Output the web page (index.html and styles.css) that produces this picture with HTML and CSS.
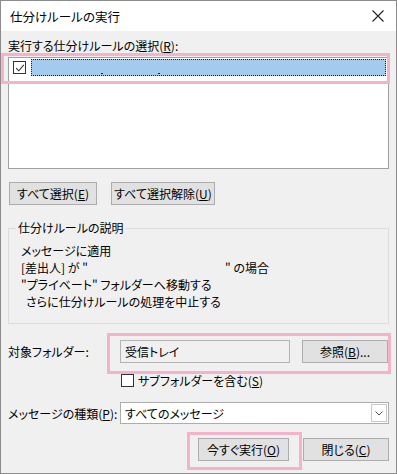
FILE: index.html
```html
<!DOCTYPE html>
<html lang="ja">
<head>
<meta charset="utf-8">
<link rel="stylesheet" href="styles.css">
</head>
<body>
<div class="window">
  <div class="titlebar">
    <span class="title">仕分けルールの実行</span>
    <svg class="close" width="14" height="14" viewBox="0 0 14 14"><path d="M1.5 1.5 L12.5 12.5 M12.5 1.5 L1.5 12.5" stroke="#222" stroke-width="1.1" fill="none"/></svg>
  </div>
  <div class="content">
    <div class="list-label">実行する仕分けルールの選択(<u>R</u>):</div>
    <div class="list">
      <div class="row">
        <span class="chk checked"><svg width="10" height="10" viewBox="0 0 10 10"><path d="M1.2 5.2 L3.8 7.8 L8.8 1.8" stroke="#333" stroke-width="1.1" fill="none"/></svg></span>
        <span class="sel"><i class="dot d1"></i><i class="dot d2"></i></span>
      </div>
    </div>
    <div class="btn-row">
      <button class="btn w88">すべて選択(<u>E</u>)</button>
      <button class="btn w104">すべて選択解除(<u>U</u>)</button>
    </div>
    <fieldset class="group">
      <legend>仕分けルールの説明</legend>
      <div class="desc">
        <div>メッセージに適用</div>
        <div class="line2"><span class="c1">[差出人] が "</span><span>" の場合</span></div>
        <div>"プライベート" フォルダーへ移動する</div>
        <div class="ind">さらに仕分けルールの処理を中止する</div>
      </div>
    </fieldset>
    <div class="folder-row">
      <span class="lbl">対象フォルダー:</span>
      <div class="field">受信トレイ</div>
      <button class="btn w86">参照(<u>B</u>)...</button>
    </div>
    <div class="sub-row">
      <span class="chk"></span><span>サブフォルダーを含む(<u>S</u>)</span>
    </div>
    <div class="type-row">
      <span class="lbl">メッセージの種類(<u>P</u>):</span>
      <div class="select"><span>すべてのメッセージ</span><span class="arrow"><svg width="8" height="5" viewBox="0 0 8 5"><path d="M0.5 0.5 L4 4 L7.5 0.5" stroke="#555" fill="none"/></svg></span></div>
    </div>
    <div class="foot-row">
      <button class="btn w91">今すぐ実行(<u>O</u>)</button>
      <button class="btn w86">閉じる(<u>C</u>)</button>
    </div>
  </div>
  <div class="hl hl1"></div>
  <div class="hl hl2"></div>
  <div class="hl hl3"></div>
</div>
</body>
</html>
```
FILE: styles.css
```css
* { box-sizing: border-box; }
html, body { margin: 0; padding: 0; }
body {
  font-family: "Noto Sans CJK JP", sans-serif;
  font-size: 12px;
  color: #000;
  background: #fff;
}
u { text-decoration: underline; text-underline-offset: 1px; }
.window {
  position: relative;
  width: 397px;
  height: 474px;
  background: #f0f0f0;
  border: 1px solid #8c8c8c;
  overflow: hidden;
  font-feature-settings: "palt";
}
.titlebar {
  height: 30px;
  background: #fff;
  display: flex;
  align-items: center;
  justify-content: space-between;
  padding: 0 9px 0 9px;
}
.title { font-size: 12.5px; }
.close { margin-right: 2px; }
.content { padding: 0 7px 0 7px; }
.list-label { margin-top: 8px; line-height: 14px; height: 14px; }
.list {
  margin-top: 4px;
  height: 112px;
  background: #fff;
  border: 1px solid #a0a0a0;
  padding: 1px 2px;
}
.row { display: flex; align-items: center; height: 17px; }
.chk {
  display: inline-flex;
  align-items: center;
  justify-content: center;
  width: 13px;
  height: 13px;
  border: 1px solid #333;
  background: #fff;
  margin-left: 2px;
  flex: none;
}
.sel {
  position: relative;
  flex: 1;
  height: 17px;
  margin-left: 5px;
  background: #a3cbef;
  border: 1px dotted #222;
}
.dot { position: absolute; bottom: 1px; width: 2px; height: 1px; background: #222; }
.d1 { left: 69px; }
.d2 { left: 126px; }
.btn-row { display: flex; gap: 14px; margin-top: 13px; padding-left: 1px; }
.btn {
  font-family: inherit;
  font-size: 12px;
  font-feature-settings: "palt";
  height: 23px;
  padding: 0;
  background: #e1e1e1;
  border: 1px solid #adadad;
  color: #000;
}
.w88 { width: 88px; }
.w104 { width: 104px; }
.w86 { width: 86px; }
.w91 { width: 91px; }
.group {
  margin: 16px 0 0 0;
  padding: 0;
  height: 103px;
  border: 1px solid #dcdcdc;
}
legend { padding: 0 2px; margin-left: 7px; line-height: 14px; }
.desc { margin-top: 7px; line-height: 17px; padding-left: 12px; }
.line2 { display: flex; }
.c1 { width: 204px; }
.ind { padding-left: 5px; }
.folder-row { display: flex; align-items: center; margin-top: 16px; height: 23px; }
.lbl { width: 112px; }
.field {
  width: 170px;
  height: 23px;
  border: 1px solid #b4b4b4;
  background: #f0f0f0;
  padding: 0 4px;
  line-height: 21px;
  margin-right: 12px;
}
.sub-row { display: flex; align-items: center; gap: 4px; margin-top: 10px; padding-left: 112px; height: 14px; }
.sub-row .chk { margin-left: 1px; width: 13px; height: 13px; }
.type-row { display: flex; align-items: center; margin-top: 15px; height: 22px; }
.select {
  flex: 1;
  height: 22px;
  display: flex;
  align-items: center;
  justify-content: space-between;
  background: #fff;
  border: 1px solid #adadad;
  padding-left: 4px;
}
.arrow {
  width: 16px;
  height: 18px;
  margin-right: 1px;
  border: 1px solid #c8c8c8;
  display: flex;
  align-items: center;
  justify-content: center;
}
.foot-row { display: flex; justify-content: flex-end; gap: 14px; margin-top: 14px; }
.hl { position: absolute; border: 3px solid #f4b3ca; }
.hl1 { left: 0; top: 52px; width: 389px; height: 31px; }
.hl2 { left: 106px; top: 332px; width: 284px; height: 41px; }
.hl3 { left: 186px; top: 431px; width: 115px; height: 38px; }
```
